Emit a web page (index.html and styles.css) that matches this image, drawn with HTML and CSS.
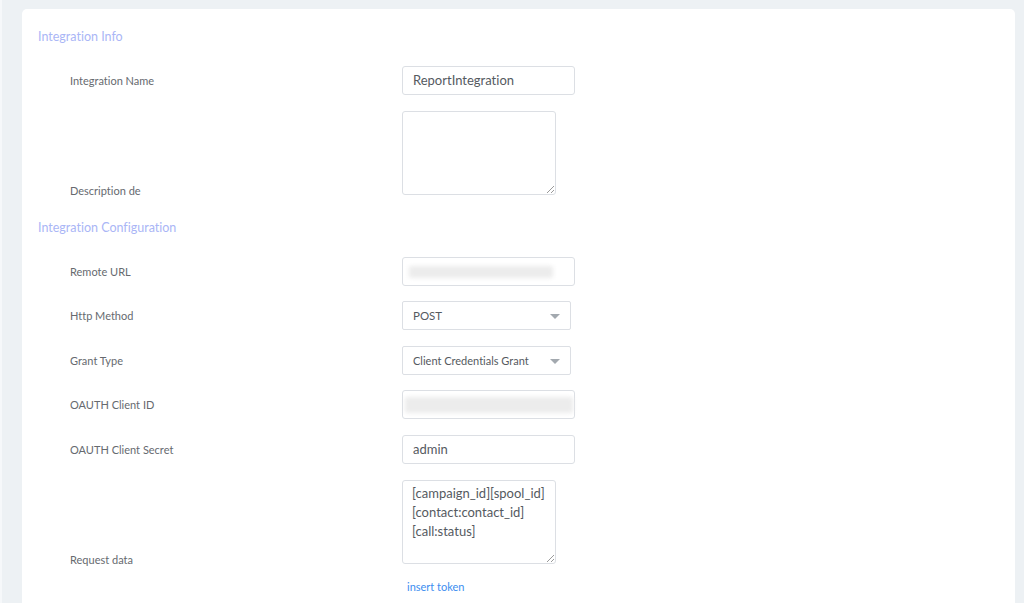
FILE: index.html
```html
<!DOCTYPE html>
<html>
<head>
<meta charset="utf-8">
<link rel="stylesheet" href="styles.css">
</head>
<body>
<div class="page">
  <div class="card">
    <div class="section-title">Integration Info</div>
    <div class="row">
      <div class="label">Integration Name</div>
      <div class="field"><div class="input">ReportIntegration</div></div>
    </div>
    <div class="row row-area">
      <div class="label">Description de</div>
      <div class="field"><div class="textarea"><span class="grip"></span></div></div>
    </div>
    <div class="section-title second">Integration Configuration</div>
    <div class="row">
      <div class="label">Remote URL</div>
      <div class="field"><div class="input"><span class="blur blur-url"></span></div></div>
    </div>
    <div class="row">
      <div class="label">Http Method</div>
      <div class="field"><div class="select">POST<span class="caret"></span></div></div>
    </div>
    <div class="row">
      <div class="label">Grant Type</div>
      <div class="field"><div class="select small">Client Credentials Grant<span class="caret"></span></div></div>
    </div>
    <div class="row">
      <div class="label">OAUTH Client ID</div>
      <div class="field"><div class="input"><span class="blur blur-id"></span></div></div>
    </div>
    <div class="row">
      <div class="label">OAUTH Client Secret</div>
      <div class="field"><div class="input">admin</div></div>
    </div>
    <div class="row row-area">
      <div class="label">Request data</div>
      <div class="field"><div class="textarea filled">[campaign_id][spool_id]<br>[contact:contact_id]<br>[call:status]<span class="grip"></span></div></div>
    </div>
    <div class="row token-row">
      <div class="label"></div>
      <div class="field"><a class="token" href="#">insert token</a></div>
    </div>
  </div>
</div>
</body>
</html>
```
FILE: styles.css
```css
html, body {
  margin: 0;
  padding: 0;
  height: 100%;
  overflow: hidden;
}
body {
  background: #edf1f4;
  font-family: Lato, "Noto Sans", sans-serif;
  font-variant-ligatures: none;
  color: #555b61;
  border-left: 2px solid #f6f8fa;
  box-sizing: border-box;
}
.page {
  padding: 9px 9px 0 20px;
}
.card {
  background: #ffffff;
  border-radius: 5px;
  padding: 20px 16px 40px 16px;
  min-height: 620px;
}
.section-title {
  color: #aab6f6;
  font-size: 12.5px;
  line-height: 16px;
  height: 16px;
}
.section-title.second {
  margin-top: 25px;
}
.row {
  display: flex;
  align-items: flex-end;
  margin-top: 15.4px;
}
.section-title + .row {
  margin-top: 21px;
}
.row-area {
  margin-top: 16px;
}
.label {
  width: 332px;
  padding-left: 32px;
  font-size: 11px;
  line-height: 14px;
  color: #666a6f;
  padding-bottom: 7px;
  flex: none;
}
.row-area .label {
  padding-bottom: 0;
  margin-bottom: -3px;
}
.field {
  flex: none;
}
.input {
  box-sizing: border-box;
  width: 173px;
  height: 29px;
  border: 1px solid #dcdfe4;
  border-radius: 3px;
  padding: 0 10px;
  font-size: 13px;
  line-height: 27px;
  color: #555a5f;
  position: relative;
}
.select {
  box-sizing: border-box;
  width: 169px;
  height: 29px;
  border: 1px solid #dcdfe4;
  border-radius: 2px;
  padding: 0 10px;
  font-size: 11.5px;
  line-height: 27px;
  color: #555a5f;
  position: relative;
}
.select.small {
  font-size: 11px;
}
.caret {
  position: absolute;
  right: 10px;
  top: 12px;
  width: 0;
  height: 0;
  border-left: 5px solid transparent;
  border-right: 5px solid transparent;
  border-top: 5px solid #a3a9af;
}
.textarea {
  box-sizing: border-box;
  width: 154px;
  height: 84px;
  border: 1px solid #dcdfe4;
  border-radius: 3px;
  position: relative;
  font-size: 13px;
  line-height: 19px;
  color: #555a5f;
  padding: 3px 9px;
}
.grip {
  position: absolute;
  right: 1px;
  bottom: 1px;
  width: 7px;
  height: 7px;
  background: linear-gradient(135deg, transparent 45%, #9a9a9a 45%, #9a9a9a 55%, transparent 55%, transparent 75%, #9a9a9a 75%, #9a9a9a 85%, transparent 85%);
}
.blur {
  position: absolute;
  top: 8px;
  height: 12px;
  background: #ececec;
  filter: blur(2px);
  border-radius: 2px;
}
.blur-url {
  left: 6px;
  width: 144px;
}
.blur-id {
  left: 2px;
  width: 168px;
  top: 6px;
  height: 16px;
}
.token-row {
  margin-top: 16px;
}
.token-row .label {
  padding-bottom: 0;
}
.token {
  display: block;
  padding-left: 5px;
  font-size: 11px;
  line-height: 14px;
  color: #3d8ef0;
  text-decoration: none;
}
```
